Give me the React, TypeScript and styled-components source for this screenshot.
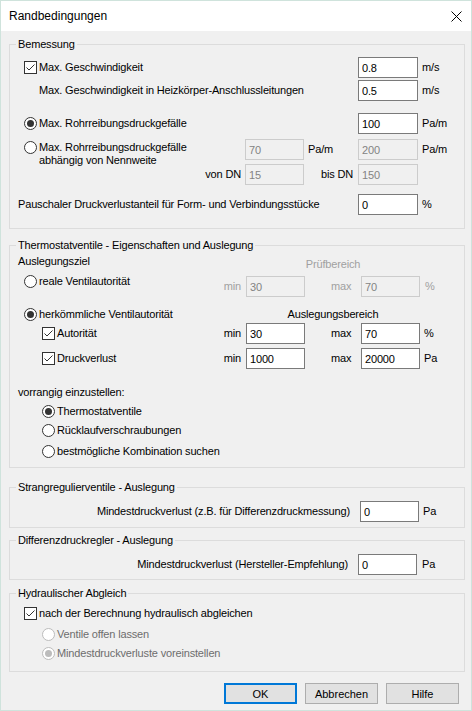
import React from 'react';
import styled, { createGlobalStyle } from 'styled-components';

const FONT = `"Liberation Sans", Arial, sans-serif`;

const GlobalStyle = createGlobalStyle`
  html, body {
    margin: 0;
    padding: 0;
    background: #f0f0f0;
  }
`;

const Window = styled.div`
  width: 472px;
  height: 711px;
  box-sizing: border-box;
  border: 1px solid #cfe3dc;
  background: #f0f0f0;
  display: flex;
  flex-direction: column;
  font-family: ${FONT};
  font-size: 11px;
  letter-spacing: -0.16px;
  color: #000;
`;

const TitleBar = styled.div`
  height: 30px;
  flex: none;
  background: #fff;
  display: flex;
  align-items: center;
  justify-content: space-between;
  padding: 0 9px 0 8px;
  font-size: 12px;
  letter-spacing: 0;
`;

const Body = styled.div`
  padding: 6px 6px 0 8px;
  display: flex;
  flex-direction: column;
`;

const Group = styled.fieldset<{ $mt: number; $pt: number; $pb: number }>`
  margin: ${p => p.$mt}px 0 0 0;
  padding: ${p => p.$pt}px 0 ${p => p.$pb}px 8px;
  border: 1px solid #dcdcdc;
  min-width: 0;
`;

const Legend = styled.legend`
  padding: 0 2px;
  margin-left: -2px;
  line-height: 14px;
`;

const Row = styled.div<{ $cols: string; $h: number; $mt?: number }>`
  display: grid;
  grid-template-columns: ${p => p.$cols};
  grid-template-rows: ${p => p.$h}px;
  height: ${p => p.$h}px;
  margin-top: ${p => p.$mt ?? 0}px;
  align-items: center;
  white-space: nowrap;
`;

const DnBlock = styled.div<{ $cols: string }>`
  display: grid;
  grid-template-columns: ${p => p.$cols};
  grid-template-rows: 21px 21px;
  row-gap: 4px;
  margin-top: 5px;
  align-items: center;
  white-space: nowrap;
`;

const Choice = styled.label<{ $indent: number; $span?: string; $disabled?: boolean; $top?: number }>`
  display: flex;
  align-items: ${p => (p.$top !== undefined ? 'flex-start' : 'center')};
  gap: 2px;
  padding-left: ${p => p.$indent}px;
  grid-column: ${p => p.$span ?? '1'};
  grid-row: 1;
  align-self: ${p => (p.$top !== undefined ? 'start' : 'center')};
  margin-top: ${p => p.$top ?? 0}px;
  line-height: 13px;
  color: ${p => (p.$disabled ? '#6d6d6d' : '#000')};
`;

const MultiLine = styled.span`
  white-space: normal;
`;

const Box = styled.span`
  width: 13px;
  height: 13px;
  flex: none;
  box-sizing: border-box;
  border: 1px solid #333;
  background: #fff;
  display: flex;
  align-items: center;
  justify-content: center;
`;

const Circle = styled.span<{ $disabled?: boolean }>`
  width: 13px;
  height: 13px;
  flex: none;
  box-sizing: border-box;
  border-radius: 50%;
  border: 1px solid ${p => (p.$disabled ? '#bcbcbc' : '#333')};
  background: #fff;
  display: flex;
  align-items: center;
  justify-content: center;
`;

const Dot = styled.span<{ $disabled?: boolean }>`
  width: 7px;
  height: 7px;
  border-radius: 50%;
  background: ${p => (p.$disabled ? '#bcbcbc' : '#333')};
`;

const Field = styled.input<{ $col: number; $row?: number }>`
  grid-column: ${p => p.$col};
  grid-row: ${p => p.$row ?? 1};
  width: 100%;
  height: 21px;
  box-sizing: border-box;
  margin: 0;
  padding: 0 3px;
  border: 1px solid ${p => (p.disabled ? '#cccccc' : '#7a7a7a')};
  background: ${p => (p.disabled ? '#f0f0f0' : '#fff')};
  color: ${p => (p.disabled ? '#838383' : '#000')};
  -webkit-text-fill-color: ${p => (p.disabled ? '#838383' : '#000')};
  opacity: 1;
  font-family: ${FONT};
  font-size: 11px;
  letter-spacing: -0.16px;
  outline: none;
`;

const Text = styled.span<{
  $col: string | number;
  $row?: number;
  $align?: 'start' | 'end' | 'center';
  $pl?: number;
  $pr?: number;
  $muted?: boolean;
  $self?: 'start' | 'center' | 'end';
}>`
  grid-column: ${p => p.$col};
  grid-row: ${p => p.$row ?? 1};
  text-align: ${p => p.$align ?? 'start'};
  padding-left: ${p => p.$pl ?? 0}px;
  padding-right: ${p => p.$pr ?? 0}px;
  align-self: ${p => p.$self ?? 'center'};
  color: ${p => (p.$muted ? '#a0a0a0' : '#000')};
  line-height: 13px;
`;

const ButtonBar = styled.div`
  display: flex;
  justify-content: flex-end;
  gap: 8px;
  margin: 11px 6px 0 0;
`;

const Button = styled.button<{ $primary?: boolean }>`
  width: 73px;
  height: 21px;
  box-sizing: border-box;
  margin: 0;
  padding: 0;
  background: #e1e1e1;
  border: ${p => (p.$primary ? '2px solid #0078d7' : '1px solid #adadad')};
  font-family: ${FONT};
  font-size: 11px;
  color: #000;
`;

const CheckMark = () => (
  <svg width="11" height="11" viewBox="0 0 11 11">
    <path d="M1.5 5.5 L4 8 L9.5 2.5" fill="none" stroke="#333" strokeWidth="1" />
  </svg>
);

const CloseIcon = () => (
  <svg width="11" height="11" viewBox="0 0 11 11">
    <path d="M0.5 0.5 L10.5 10.5 M10.5 0.5 L0.5 10.5" stroke="#000" strokeWidth="1" />
  </svg>
);

function Check({ children, indent, span }: { children: React.ReactNode; indent: number; span?: string }) {
  return (
    <Choice $indent={indent} $span={span}>
      <Box>
        <CheckMark />
      </Box>
      {children}
    </Choice>
  );
}

function Radio({
  children,
  indent,
  span,
  selected,
  disabled,
  top,
}: {
  children: React.ReactNode;
  indent: number;
  span?: string;
  selected?: boolean;
  disabled?: boolean;
  top?: number;
}) {
  return (
    <Choice $indent={indent} $span={span} $disabled={disabled} $top={top}>
      <Circle $disabled={disabled}>{selected && <Dot $disabled={disabled} />}</Circle>
      {children}
    </Choice>
  );
}

const COLS_1 = '227px 59px 54px 60px 1fr';
const COLS_2 = '228px 59px 56px 59px 1fr';

export default function App() {
  return (
    <>
      <GlobalStyle />
      <Window>
        <TitleBar>
          <span>Randbedingungen</span>
          <CloseIcon />
        </TitleBar>
        <Body>
          <Group $mt={0} $pt={6} $pb={13}>
            <Legend>Bemessung</Legend>
            <Row $cols={COLS_1} $h={21}>
              <Check indent={6} span="1 / 4">Max. Geschwindigkeit</Check>
              <Field $col={4} defaultValue="0.8" />
              <Text $col={5} $pl={4}>m/s</Text>
            </Row>
            <Row $cols={COLS_1} $h={21} $mt={2}>
              <Text $col="1 / 4" $pl={21}>Max. Geschwindigkeit in Heizkörper-Anschlussleitungen</Text>
              <Field $col={4} defaultValue="0.5" />
              <Text $col={5} $pl={4}>m/s</Text>
            </Row>
            <Row $cols={COLS_1} $h={21} $mt={12}>
              <Radio indent={6} span="1 / 4" selected>Max. Rohrreibungsdruckgefälle</Radio>
              <Field $col={4} defaultValue="100" />
              <Text $col={5} $pl={4}>Pa/m</Text>
            </Row>
            <DnBlock $cols={COLS_1}>
              <Radio indent={6} top={2}>
                <MultiLine>
                  Max. Rohrreibungsdruckgefälle
                  <br />
                  abhängig von Nennweite
                </MultiLine>
              </Radio>
              <Field $col={2} disabled defaultValue="70" />
              <Text $col={3} $pl={4}>Pa/m</Text>
              <Field $col={4} disabled defaultValue="200" />
              <Text $col={5} $pl={4}>Pa/m</Text>
              <Text $col={1} $row={2} $align="end" $pr={4}>von DN</Text>
              <Field $col={2} $row={2} disabled defaultValue="15" />
              <Text $col={3} $row={2} $align="end" $pr={5}>bis DN</Text>
              <Field $col={4} $row={2} disabled defaultValue="150" />
            </DnBlock>
            <Row $cols={COLS_1} $h={21} $mt={9}>
              <Text $col="1 / 4">Pauschaler Druckverlustanteil für Form- und Verbindungsstücke</Text>
              <Field $col={4} defaultValue="0" />
              <Text $col={5} $pl={4}>%</Text>
            </Row>
          </Group>

          <Group $mt={9} $pt={3} $pb={9}>
            <Legend>Thermostatventile - Eigenschaften und Auslegung</Legend>
            <Row $cols={COLS_2} $h={16}>
              <Text $col={1} $self="start">Auslegungsziel</Text>
              <Text $col="2 / 5" $align="center" $self="end" $muted>Prüfbereich</Text>
            </Row>
            <Row $cols={COLS_2} $h={21} $mt={5}>
              <Radio indent={6} top={-1}>reale Ventilautorität</Radio>
              <Text $col={1} $align="end" $pr={5} $muted>min</Text>
              <Field $col={2} disabled defaultValue="30" />
              <Text $col={3} $pl={26} $muted>max</Text>
              <Field $col={4} disabled defaultValue="70" />
              <Text $col={5} $pl={5} $muted>%</Text>
            </Row>
            <Row $cols={COLS_2} $h={14} $mt={10}>
              <Radio indent={6} selected>herkömmliche Ventilautorität</Radio>
              <Text $col="2 / 5" $align="center">Auslegungsbereich</Text>
            </Row>
            <Row $cols={COLS_2} $h={21} $mt={2}>
              <Check indent={24}>Autorität</Check>
              <Text $col={1} $align="end" $pr={5}>min</Text>
              <Field $col={2} defaultValue="30" />
              <Text $col={3} $pl={26}>max</Text>
              <Field $col={4} defaultValue="70" />
              <Text $col={5} $pl={4}>%</Text>
            </Row>
            <Row $cols={COLS_2} $h={21} $mt={4}>
              <Check indent={24}>Druckverlust</Check>
              <Text $col={1} $align="end" $pr={5}>min</Text>
              <Field $col={2} defaultValue="1000" />
              <Text $col={3} $pl={26}>max</Text>
              <Field $col={4} defaultValue="20000" />
              <Text $col={5} $pl={4}>Pa</Text>
            </Row>
            <Row $cols="1fr" $h={14} $mt={16}>
              <Text $col={1}>vorrangig einzustellen:</Text>
            </Row>
            <Row $cols="1fr" $h={14} $mt={5}>
              <Radio indent={24} selected>Thermostatventile</Radio>
            </Row>
            <Row $cols="1fr" $h={14} $mt={5}>
              <Radio indent={24}>Rücklaufverschraubungen</Radio>
            </Row>
            <Row $cols="1fr" $h={14} $mt={7}>
              <Radio indent={24}>bestmögliche Kombination suchen</Radio>
            </Row>
          </Group>

          <Group $mt={12} $pt={7} $pb={5}>
            <Legend>Strangregulierventile - Auslegung</Legend>
            <Row $cols="1fr 59px 45px" $h={21}>
              <Text $col={1} $align="end" $pr={10}>Mindestdruckverlust (z.B. für Differenzdruckmessung)</Text>
              <Field $col={2} defaultValue="0" />
              <Text $col={3} $pl={4}>Pa</Text>
            </Row>
          </Group>

          <Group $mt={5} $pt={7} $pb={4}>
            <Legend>Differenzdruckregler - Auslegung</Legend>
            <Row $cols="1fr 59px 47px" $h={21}>
              <Text $col={1} $align="end" $pr={10}>Mindestdruckverlust (Hersteller-Empfehlung)</Text>
              <Field $col={2} defaultValue="0" />
              <Text $col={3} $pl={5}>Pa</Text>
            </Row>
          </Group>

          <Group $mt={6} $pt={6} $pb={11}>
            <Legend>Hydraulischer Abgleich</Legend>
            <Row $cols="1fr" $h={14}>
              <Check indent={6}>nach der Berechnung hydraulisch abgleichen</Check>
            </Row>
            <Row $cols="1fr" $h={14} $mt={7}>
              <Radio indent={24} disabled>Ventile offen lassen</Radio>
            </Row>
            <Row $cols="1fr" $h={14} $mt={5}>
              <Radio indent={24} disabled selected>Mindestdruckverluste voreinstellen</Radio>
            </Row>
          </Group>

          <ButtonBar>
            <Button $primary>OK</Button>
            <Button>Abbrechen</Button>
            <Button>Hilfe</Button>
          </ButtonBar>
        </Body>
      </Window>
    </>
  );
}
